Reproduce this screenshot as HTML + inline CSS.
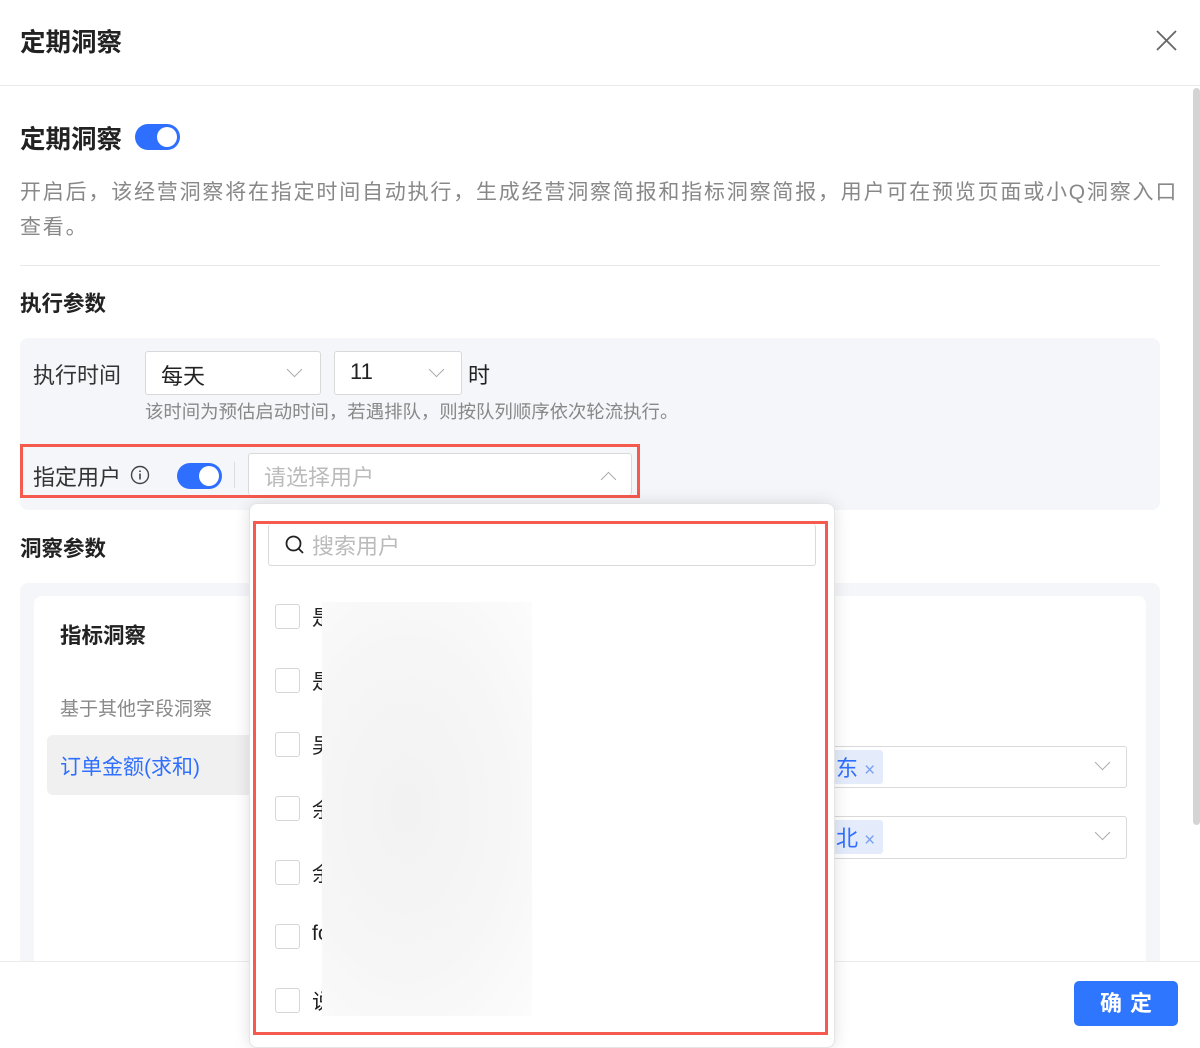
<!DOCTYPE html>
<html><head><meta charset="utf-8"><style>
*{box-sizing:border-box;margin:0;padding:0}
body{width:1200px;height:1042px;position:relative;overflow:hidden;background:#fff;font-family:"Liberation Sans","Noto Sans CJK SC",sans-serif;color:#222}
.a{position:absolute;white-space:nowrap}
.b{font-weight:bold}
.sel{position:absolute;border:1px solid #d9d9d9;border-radius:3px;background:#fff}
.chev{position:absolute;width:11px;height:11px;border-right:1.5px solid #aaa;border-bottom:1.5px solid #aaa;transform:rotate(45deg)}
.tog{position:absolute;width:45px;height:26px;border-radius:13px;background:#2f6fff}
.tog:after{content:"";position:absolute;right:3px;top:3px;width:20px;height:20px;border-radius:50%;background:#fff}
.cb{position:absolute;left:275px;width:25px;height:25px;border:1px solid #d6d6d6;border-radius:3px;background:#fff}
.ch{position:absolute;left:312px;font-size:21px;color:#222}
</style></head><body>
<div class="a b" style="left:20px;top:22px;font-size:25.5px">定期洞察</div>
<svg class="a" style="left:1156px;top:30px" width="21" height="21"><path d="M1 1L20 20M20 1L1 20" stroke="#666" stroke-width="1.8"/></svg>
<div class="a" style="left:0;top:85px;width:1200px;height:1px;background:#ececec"></div>
<div class="a" style="left:1193px;top:88px;width:7px;height:737px;background:#d4d4d4;border-radius:4px"></div>

<div class="a b" style="left:20px;top:119px;font-size:25.5px">定期洞察</div>
<div class="tog" style="left:135px;top:124px"></div>
<div class="a" style="left:20px;top:175px;font-size:21px;letter-spacing:1.8px;color:#888;line-height:35px">开启后，该经营洞察将在指定时间自动执行，生成经营洞察简报和指标洞察简报，用户可在预览页面或小Q洞察入口<br>查看。</div>
<div class="a" style="left:20px;top:265px;width:1140px;height:1px;background:#e8e8e8"></div>
<div class="a b" style="left:20px;top:287px;font-size:21.5px">执行参数</div>

<div class="a" style="left:20px;top:338px;width:1140px;height:172px;background:#f5f6fa;border-radius:8px"></div>
<div class="a" style="left:33px;top:358px;font-size:22px;color:#333">执行时间</div>
<div class="sel" style="left:145px;top:351px;width:176px;height:44px"><span class="a" style="left:15px;top:7px;font-size:22px">每天</span><div class="chev" style="left:143px;top:12px"></div></div>
<div class="sel" style="left:334px;top:351px;width:128px;height:44px"><span class="a" style="left:15px;top:7px;font-size:22px">11</span><div class="chev" style="left:96px;top:12px"></div></div>
<div class="a" style="left:468px;top:358px;font-size:22px">时</div>
<div class="a" style="left:145px;top:398px;font-size:18.4px;color:#888">该时间为预估启动时间，若遇排队，则按队列顺序依次轮流执行。</div>

<div class="a" style="left:20px;top:444px;width:620px;height:54px;border:3px solid #f55a4e"></div>
<div class="a" style="left:33px;top:460px;font-size:22px;color:#333">指定用户</div>
<svg class="a" style="left:130px;top:465px" width="20" height="20"><circle cx="10" cy="10" r="8.5" fill="none" stroke="#444" stroke-width="1.4"/><path d="M10 8.5V14.5M10 5.5V7" stroke="#444" stroke-width="1.6"/></svg>
<div class="tog" style="left:177px;top:463px"></div>
<div class="a" style="left:234px;top:462px;width:1px;height:26px;background:#ddd"></div>
<div class="sel" style="left:248px;top:453px;width:384px;height:42px;border-bottom:none"><span class="a" style="left:15px;top:6px;font-size:22px;color:#bbb">请选择用户</span><div class="chev" style="left:354px;top:20px;transform:rotate(225deg)"></div></div>

<div class="a b" style="left:20px;top:532px;font-size:21.5px">洞察参数</div>
<div class="a" style="left:20px;top:583px;width:1140px;height:400px;background:#f5f6fa;border-radius:8px"></div>
<div class="a" style="left:34px;top:596px;width:1112px;height:400px;background:#fff;border-radius:8px"></div>
<div class="a b" style="left:60px;top:619px;font-size:21.5px">指标洞察</div>
<div class="a" style="left:60px;top:694px;font-size:19px;color:#888">基于其他字段洞察</div>
<div class="a" style="left:47px;top:735px;width:220px;height:60px;background:#f0f0f0;border-radius:6px"></div>
<div class="a" style="left:60px;top:751px;font-size:21px;color:#2f6fff">订单金额(求和)</div>
<div class="sel" style="left:820px;top:746px;width:307px;height:42px"><div class="a" style="left:0;top:3px;width:62px;height:34px;background:#e4ecfb;border-radius:3px"></div><span class="a" style="left:15px;top:4px;font-size:22px;color:#2f6fff">东 <span style="font-size:19px;color:#7aa0f0">×</span></span><div class="chev" style="left:276px;top:10px"></div></div>
<div class="sel" style="left:820px;top:816px;width:307px;height:43px"><div class="a" style="left:0;top:3px;width:62px;height:34px;background:#e4ecfb;border-radius:3px"></div><span class="a" style="left:15px;top:4px;font-size:22px;color:#2f6fff">北 <span style="font-size:19px;color:#7aa0f0">×</span></span><div class="chev" style="left:276px;top:10px"></div></div>

<div class="a" style="left:0;top:961px;width:1200px;height:81px;background:#fff;border-top:1px solid #ececec"></div>
<div class="a b" style="left:1074px;top:981px;width:104px;height:45px;background:#2f76ff;border-radius:5px;color:#fff;font-size:22px;text-align:center;line-height:45px;letter-spacing:8px;padding-left:8px">确定</div>

<div class="a" style="left:249px;top:503px;width:586px;height:545px;background:#fff;border:1px solid #e4e4e4;border-radius:8px;box-shadow:0 0 16px rgba(0,0,0,.12)"></div>
<div class="a" style="left:253px;top:521px;width:575px;height:514px;border:3px solid #f55a4e"></div>
<div class="a" style="left:268px;top:524px;width:548px;height:42px;border:1px solid #d9d9d9;border-radius:3px;border-top:none"></div>
<svg class="a" style="left:284px;top:534px" width="22" height="22"><circle cx="9.5" cy="9.5" r="7" fill="none" stroke="#222" stroke-width="1.8"/><path d="M14.5 14.5L19 19" stroke="#222" stroke-width="1.8"/></svg>
<div class="a" style="left:312px;top:529px;font-size:22px;color:#bbb">搜索用户</div>
<div class="cb" style="top:604px"></div><div class="ch" style="top:602px">是</div>
<div class="cb" style="top:668px"></div><div class="ch" style="top:666px">是</div>
<div class="cb" style="top:732px"></div><div class="ch" style="top:730px">吴</div>
<div class="cb" style="top:796px"></div><div class="ch" style="top:794px">余</div>
<div class="cb" style="top:860px"></div><div class="ch" style="top:858px">余</div>
<div class="cb" style="top:924px"></div><div class="ch" style="top:922px">fo</div>
<div class="cb" style="top:988px"></div><div class="ch" style="top:986px">说</div>
<div class="a" style="left:322px;top:602px;width:210px;height:414px;background:radial-gradient(ellipse at 40% 50%,#f2f2f2 0%,#f6f6f6 55%,#fcfcfc 100%)"></div>
</body></html>
